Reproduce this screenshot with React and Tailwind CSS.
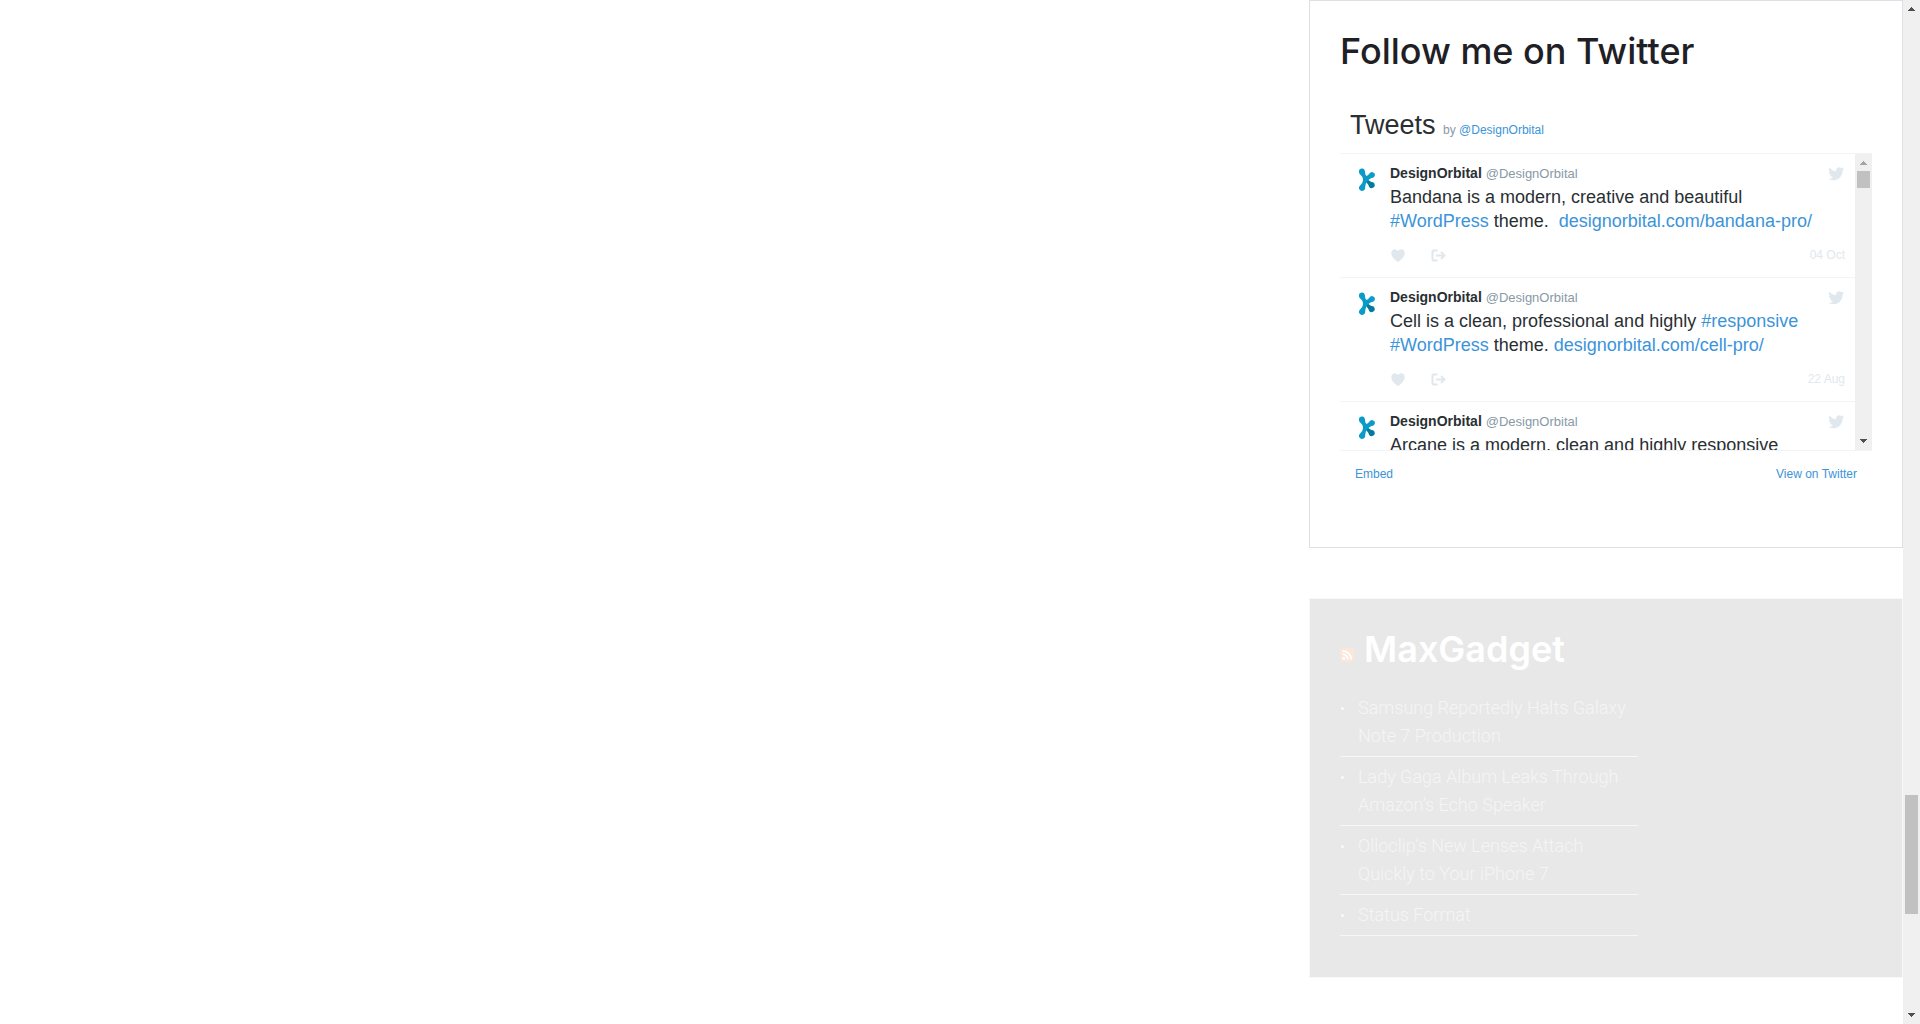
import React from 'react';

const tweets = [
  {
    id: 'bandana',
    date: '04 Oct',
    body: (
      <>
        Bandana is a modern, creative and beautiful <TweetLink>#WordPress</TweetLink> theme.&nbsp;{' '}
        <TweetLink>designorbital.com/bandana-pro/</TweetLink>
      </>
    ),
  },
  {
    id: 'cell',
    date: '22 Aug',
    body: (
      <>
        Cell is a clean, professional and highly <TweetLink>#responsive</TweetLink>{' '}
        <TweetLink>#WordPress</TweetLink> theme. <TweetLink>designorbital.com/cell-pro/</TweetLink>
      </>
    ),
  },
  {
    id: 'arcane',
    date: '',
    body: <>Arcane is a modern, clean and highly responsive</>,
  },
];

const posts = [
  'Samsung Reportedly Halts Galaxy Note 7 Production',
  'Lady Gaga Album Leaks Through Amazon’s Echo Speaker',
  'Olloclip’s New Lenses Attach Quickly to Your iPhone 7',
  'Status Format',
];

function TweetLink({ children }) {
  return (
    <a href="#" className="text-[#3b94d9]">
      {children}
    </a>
  );
}

function OrbitalLogo() {
  return (
    <svg viewBox="0 0 18 24" className="mt-[14px] h-6 w-[18px] shrink-0" aria-hidden="true">
      <path d="M8 12 9.500 10.500C11 13.500 13 13.800 15 14.300A3.100 3.100 0 1 1 11.200 19C10.500 17 9.500 15.500 8 14Z" fill="#047a9c" />
      <path d="M1 4.200A3 3 0 0 1 6.900 2.900C7.200 5 7.200 6.800 8.400 8 9.800 7.600 11 6.200 12.200 4.700A2.900 2.900 0 1 1 15 9.700C13 10 11.400 11 10 12.500 8 14.500 7.400 16.500 7.100 20.500A3.100 3.100 0 1 1 1.300 18.500C2.500 16.500 4.500 15.500 5 12.500 5.200 9.500 4 8.500 2.200 6.600A3 3 0 0 1 1 4.200Z" fill="#0a9bc9" />
    </svg>
  );
}

function Bird() {
  return (
    <svg viewBox="0 0 72 72" className="h-[18px] w-[18px]" fill="#e1e8ed" aria-hidden="true">
      <path d="M68.812 15.14c-2.348 1.04-4.87 1.744-7.52 2.06 2.704-1.62 4.78-4.186 5.757-7.243-2.53 1.5-5.33 2.592-8.314 3.176C56.35 10.59 52.948 9 49.182 9c-7.23 0-13.092 5.86-13.092 13.093 0 1.026.118 2.02.338 2.98C25.543 24.527 15.9 19.318 9.44 11.396c-1.125 1.936-1.77 4.184-1.77 6.58 0 4.543 2.312 8.552 5.824 10.9-2.146-.07-4.165-.658-5.93-1.64-.002.056-.002.11-.002.163 0 6.345 4.513 11.638 10.504 12.84-1.1.298-2.256.457-3.45.457-.845 0-1.666-.078-2.464-.23 1.667 5.2 6.5 8.985 12.23 9.09-4.482 3.51-10.13 5.605-16.26 5.605-1.055 0-2.096-.06-3.122-.184 5.794 3.717 12.676 5.882 20.067 5.882 24.083 0 37.25-19.95 37.25-37.25 0-.565-.013-1.133-.038-1.693 2.558-1.847 4.778-4.15 6.532-6.774z" />
    </svg>
  );
}

function Heart() {
  return (
    <svg viewBox="0 0 14 13" className="h-[13px] w-3.5" fill="#e1e8ed" aria-hidden="true">
      <path d="M7 13C5 11.8.3 8.200.3 4.200.3 1.900 1.900.3 3.900.3 5.300.3 6.400 1.100 7 2.200 7.600 1.100 8.700.3 10.100.3c2 0 3.600 1.600 3.600 3.900C13.700 8.200 9 11.800 7 13Z" />
    </svg>
  );
}

function Share() {
  return (
    <svg viewBox="0 0 15 13" className="h-[13px] w-[15px]" fill="none" stroke="#e1e8ed" strokeWidth="2" aria-hidden="true">
      <path d="M6.500 1.500H2.500Q1.500 1.500 1.500 2.500V10.500Q1.500 11.500 2.500 11.500H6.500M5 6.500H13.500M10 3 13.500 6.500 10 10" />
    </svg>
  );
}

function Rss() {
  return (
    <svg viewBox="0 0 14 14" className="h-3.5 w-3.5" aria-hidden="true">
      <rect width="14" height="14" rx="2" fill="#fbe6d9" />
      <circle cx="3.800" cy="10.300" r="1.500" fill="#fff" />
      <path d="M2.500 6.200A5.300 5.300 0 0 1 7.900 11.600M2.500 3A8.600 8.600 0 0 1 11.200 11.600" fill="none" stroke="#fff" strokeWidth="1.800" />
    </svg>
  );
}

function Arrow({ down = false, muted = false }) {
  return (
    <svg viewBox="0 0 7 4" className="h-1 w-[7px]" fill={muted ? '#a3a3a3' : '#505050'} shapeRendering="crispEdges" aria-hidden="true">
      <path d={down ? 'M0 0H7V1H6V2H5V3H4V4H3V3H2V2H1V1H0Z' : 'M0 4H7V3H6V2H5V1H4V0H3V1H2V2H1V3H0Z'} />
    </svg>
  );
}

function Tweet({ tweet }) {
  return (
    <li className="flex border-b border-[#f2f4f5] pr-[10px] pb-[14px] pl-[18px]">
      <OrbitalLogo />
      <article className="ml-[14px] min-w-0 flex-1">
        <div className="flex items-center justify-between pt-[9px]">
          <p className="text-sm leading-5">
            <a href="#" className="font-bold text-[#292f33]">DesignOrbital</a>{' '}
            <a href="#" className="text-[13px] text-[#8899a6]">@DesignOrbital</a>
          </p>
          <a href="#" aria-label="View on Twitter"><Bird /></a>
        </div>
        <p className="pt-px text-lg leading-6 text-[#292f33]">{tweet.body}</p>
        <div className="flex items-center pt-[14px] pl-px text-xs text-[#e1e8ed]">
          <button type="button" aria-label="Like"><Heart /></button>
          <button type="button" aria-label="Share" className="ml-[26px]"><Share /></button>
          <time className="ml-auto leading-4">{tweet.date}</time>
        </div>
      </article>
    </li>
  );
}

export default function App() {
  return (
    <div className="flex h-screen overflow-hidden bg-white font-['Liberation_Sans',Arial,sans-serif]">
      <main className="flex-1" />
      <aside className="w-[594px] shrink-0">
        <section className="border border-[#dfdfe8] px-[30px] pb-[65px]">
          <h2 className="pt-7 font-['Inter',sans-serif] text-4xl leading-[44px] font-medium text-[#1f2026]">
            Follow me on Twitter
          </h2>
          <div className="pt-8">
            <h3 className="px-[10px] pb-2 text-[27px] leading-10 text-[#292f33]">
              Tweets{' '}
              <span className="text-xs text-[#8899a6]">
                by <TweetLink>@DesignOrbital</TweetLink>
              </span>
            </h3>
            <div className="flex h-[298px] border-y border-[#f2f4f5]">
              <ol className="min-w-0 flex-1 overflow-hidden">
                {tweets.map((tweet) => (
                  <Tweet key={tweet.id} tweet={tweet} />
                ))}
              </ol>
              <div className="flex w-[17px] flex-col items-center bg-[#f0f0f0] py-[7px]">
                <Arrow muted />
                <div className="mt-1.5 h-[17px] w-[13px] bg-[#c1c1c1]" />
                <div className="mt-auto"><Arrow down /></div>
              </div>
            </div>
            <div className="flex justify-between px-[15px] pt-[15px] text-xs leading-4">
              <TweetLink>Embed</TweetLink>
              <TweetLink>View on Twitter</TweetLink>
            </div>
          </div>
        </section>

        <section className="mt-[50px] border border-[#f8f8f8] bg-[#e8e8e8] px-[30px] pb-[41px]">
          <h2 className="flex items-baseline gap-[10px] pt-7 font-['Inter',sans-serif] text-4xl leading-[44px] font-semibold text-white">
            <a href="#" aria-label="RSS feed"><Rss /></a>
            <a href="#">MaxGadget</a>
          </h2>
          <ul className="mt-[17px] w-[298px] font-['Roboto',sans-serif] text-lg leading-7 font-light text-[#f5f5f5]">
            {posts.map((post) => (
              <li key={post} className="flex border-b border-[#f7f7f7] py-1.5">
                <span className="mt-[13px] mr-[14px] ml-px size-[3px] shrink-0 rounded-full bg-[#fafafa]" />
                <a href="#">{post}</a>
              </li>
            ))}
          </ul>
        </section>
      </aside>

      <div className="flex w-[17px] shrink-0 flex-col items-center bg-[#f0f0f0] py-[7px]">
        <Arrow />
        <div className="mt-[784px] h-[119px] w-[13px] bg-[#c1c1c1]" />
        <div className="mt-auto"><Arrow down /></div>
      </div>
    </div>
  );
}
